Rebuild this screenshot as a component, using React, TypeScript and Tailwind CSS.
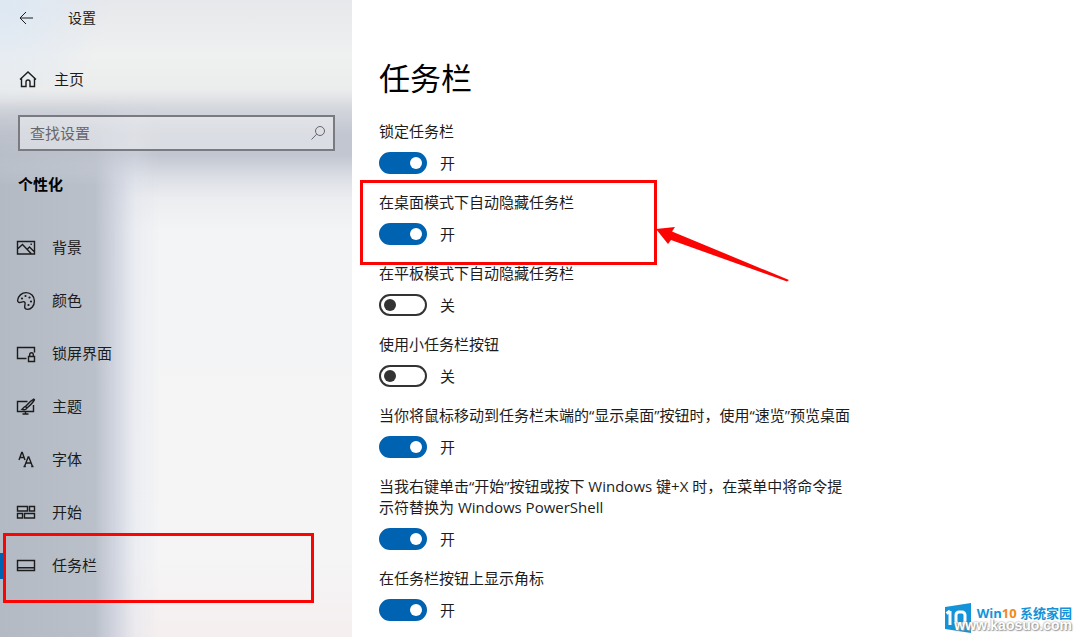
import { useState } from 'react';
import type { ReactNode } from 'react';
import clsx from 'clsx';

interface NavItem {
  id: string;
  label: string;
  icon: ReactNode;
}

interface Setting {
  id: string;
  label: string;
  on: boolean;
  marked?: boolean;
}

const iconProps = {
  width: 20,
  height: 20,
  viewBox: '0 0 20 20',
  fill: 'none',
  stroke: 'currentColor',
  strokeWidth: 1.4,
  'aria-hidden': true,
} as const;

const navItems: NavItem[] = [
  {
    id: 'background',
    label: '背景',
    icon: (
      <svg {...iconProps}>
        <path d="M1.500 3.500h17v12.500h-17zM1.500 11l5-4.500L15.500 16M11 11.500l2.500-2.500 5 5" />
        <path d="M14.500 6.300h1.400" />
      </svg>
    ),
  },
  {
    id: 'colors',
    label: '颜色',
    icon: (
      <svg {...iconProps}>
        <path d="M1.6 9.5C2 5 5.8 1.6 10.2 1.6c4.700 0 8.200 3.700 8.200 8.400 0 4.800-3.200 8.400-6.700 8.400-2.200 0-3.200-1.200-3-3.200.2-1.800.8-2.800.2-3.800-.7-1.200-2-.8-3.300-.3-2.100.8-4.100.4-4-1.600z" />
        <g fill="currentColor" stroke="none">
          <circle cx="6" cy="7.5" r="1.100" />
          <circle cx="9.500" cy="5" r="1.100" />
          <circle cx="13.500" cy="6.500" r="1.100" />
          <circle cx="15" cy="10.500" r="1.100" />
          <circle cx="12.500" cy="14" r="1.100" />
        </g>
      </svg>
    ),
  },
  {
    id: 'lockscreen',
    label: '锁屏界面',
    icon: (
      <svg {...iconProps}>
        <path d="M18.500 8.500V3.500h-17v11h9" />
        <path d="M12.500 12.500h6v5h-6zM13.700 12.500v-2a1.800 1.800 0 0 1 3.600 0v2" />
      </svg>
    ),
  },
  {
    id: 'themes',
    label: '主题',
    icon: (
      <svg {...iconProps}>
        <path d="M11.500 4.500h-10v10h16V8M9.500 14.500v2.500M6.500 17h6" />
        <path d="M17.800 2.200c-2 1-6 4.500-8.300 7.300l1.500 1.500c2.700-2.400 6.400-6.300 7.400-8.200zM9.500 9.500c-1.800 0-2 2-3.500 2.800 1.800.8 4.300.5 5-1.300" />
      </svg>
    ),
  },
  {
    id: 'fonts',
    label: '字体',
    icon: (
      <svg {...iconProps}>
        <path d="M3 10l2.700-7.500h.6L9 10M4 7.500h4M8.500 16.500l3.700-9.500h.6l3.700 9.500M10 13h5M7.500 16.500h2.300M15.200 16.500h2.300" />
      </svg>
    ),
  },
  {
    id: 'start',
    label: '开始',
    icon: (
      <svg {...iconProps}>
        <path d="M1.500 3.500h10v4.500h-10zM13.500 3.500h5v4.500h-5zM1.500 10.500h5v4.500h-5zM8.500 10.500h10v4.500h-10z" />
      </svg>
    ),
  },
  {
    id: 'taskbar',
    label: '任务栏',
    icon: (
      <svg {...iconProps}>
        <path d="M1.500 4.500h17v10h-17zM1.500 11.800h17" />
      </svg>
    ),
  },
];

const initialSettings: Setting[] = [
  { id: 'lock', label: '锁定任务栏', on: true },
  { id: 'hide-desktop', label: '在桌面模式下自动隐藏任务栏', on: true, marked: true },
  { id: 'hide-tablet', label: '在平板模式下自动隐藏任务栏', on: false },
  { id: 'small', label: '使用小任务栏按钮', on: false },
  {
    id: 'peek',
    label: '当你将鼠标移动到任务栏末端的“显示桌面”按钮时，使用“速览”预览桌面',
    on: true,
  },
  {
    id: 'powershell',
    label: '当我右键单击“开始”按钮或按下 Windows 键+X 时，在菜单中将命令提示符替换为 Windows PowerShell',
    on: true,
  },
  { id: 'badges', label: '在任务栏按钮上显示角标', on: true },
];

function SettingRow({ setting, onToggle }: { setting: Setting; onToggle: () => void }) {
  const { id, label, on, marked } = setting;

  return (
    <div className="relative flex flex-col gap-[10px]">
      <label htmlFor={id} className="max-w-[474px] leading-[21px]">
        {label}
      </label>
      <div className="flex items-center gap-[13px]">
        <button
          id={id}
          type="button"
          role="switch"
          aria-checked={on}
          onClick={onToggle}
          className={clsx(
            'flex h-[22px] w-12 items-center rounded-full border-2 px-[3px]',
            on ? 'justify-end border-[#0063b1] bg-[#0063b1]' : 'justify-start border-[#333] bg-white'
          )}
        >
          <span className={clsx('size-3 rounded-full', on ? 'bg-white' : 'bg-[#333]')} />
        </button>
        <span className="leading-[22px]">{on ? '开' : '关'}</span>
      </div>
      {marked && (
        <>
          <div className="pointer-events-none absolute -top-3 -left-[19px] h-[85px] w-[297px] border-3 border-[#fb0404]" />
          <svg
            className="pointer-events-none absolute top-[31px] left-[276px]"
            width="140"
            height="64"
            viewBox="0 0 140 64"
            aria-hidden="true"
          >
            <path d="M1 6L20 4l-3 4.500 117 48.500-2 1.500L16 17l-3 4z" fill="#fb0404" />
          </svg>
        </>
      )}
    </div>
  );
}

function Watermark() {
  return (
    <div className="pointer-events-none absolute right-2 bottom-1 flex items-start gap-[5px]">
      <svg width="28" height="30" viewBox="0 0 28 30" aria-hidden="true">
        <path d="M1 4L27 0v30L1 26z" fill="#1593d8" />
        <path d="M6 8v14M2.500 10.500L6 8" stroke="#fff" strokeWidth="3" fill="none" />
        <rect x="12" y="9" width="9" height="12" rx="3" stroke="#fff" strokeWidth="3" fill="none" />
      </svg>
      <div className="text-[13px] leading-[20px] font-bold whitespace-nowrap text-[#1593d8]">
        Win<span className="text-[#f08a24]">10</span> 系统家园
      </div>
      <span className="absolute right-0 bottom-0 font-['Liberation_Sans',sans-serif] text-[14px] leading-[16px] font-bold text-white [text-shadow:0_0_2px_#777,1px_1px_1px_#aaa]">
        www.kaosuo.com
      </span>
    </div>
  );
}

export default function App() {
  const [active, setActive] = useState('taskbar');
  const [query, setQuery] = useState('');
  const [settings, setSettings] = useState(initialSettings);

  const toggle = (id: string) => {
    setSettings(settings.map(s => (s.id === id ? { ...s, on: !s.on } : s)));
  };

  return (
    <div className="relative flex min-h-screen bg-white font-['Open_Sans','Noto_Sans_CJK_SC',sans-serif] text-[15px] text-[#1c1c1c]">
      <aside className="relative w-[352px] shrink-0 bg-[radial-gradient(circle_at_0px_0px,#dde8f4_0px,transparent_110px),linear-gradient(#e6e8eb_0px,#eff0f0_55px,#ebecec_90px,#d2d5dc_110px,#c2c6d0_135px,#c2c6d0_155px,#dcdfe6_178px,#ecedf0_198px,#f3f4f5_230px,#f5f5f6_560px,#f5efef_637px)]">
        <div className="absolute inset-0 bg-[linear-gradient(90deg,#b3bac4_0px,#bac0ca_95px,rgba(200,205,218,0.8)_115px,rgba(222,226,236,0.4)_135px,rgba(236,238,243,0)_160px)] mask-[linear-gradient(transparent_100px,#000_185px)]" />
        <div className="relative flex flex-col">
          <header className="flex h-[35px] items-center gap-[34px] pl-[18px]">
            <button type="button" aria-label="返回">
              <svg width="16" height="16" viewBox="0 0 16 16" fill="none" stroke="currentColor" aria-hidden="true">
                <path d="M15 8H2M8 2L2 8l6 6" />
              </svg>
            </button>
            <span className="text-[14px]">设置</span>
          </header>
          <a href="#home" className="mt-6 flex h-10 items-center gap-4 pl-[18px]">
            <svg {...iconProps}>
              <path d="M2 10.500L10 3l8 7.500M3.500 9.500v8H8v-4.500q0-2 2-2t2 2v4.500h4.500v-8" />
            </svg>
            主页
          </a>
          <div className="mr-[17px] ml-[18px] mt-4 flex h-9 items-center border-2 border-[#7a7b80] bg-white/40 pr-[7px] pl-[10px]">
            <input
              type="text"
              aria-label="查找设置"
              placeholder="查找设置"
              value={query}
              onChange={e => setQuery(e.target.value)}
              className="min-w-0 flex-1 outline-none placeholder:text-[#66676c]"
            />
            <svg width="16" height="16" viewBox="0 0 16 16" fill="none" stroke="#66676c" aria-hidden="true">
              <circle cx="10" cy="6" r="4.500" />
              <path d="M6.700 9.200L1.500 14.500" />
            </svg>
          </div>
          <h2 className="mt-[23px] pl-[18px] leading-[21px] font-bold text-black">个性化</h2>
          <nav className="mt-[26px] flex flex-col">
            {navItems.map(item => (
              <a
                key={item.id}
                href={`#${item.id}`}
                onClick={() => setActive(item.id)}
                className="relative flex h-[53px] items-center gap-4 pl-4"
              >
                {active === item.id && <span className="absolute left-0 h-[26px] w-[3px] bg-[#0063b1]" />}
                {item.icon}
                {item.label}
                {item.id === 'taskbar' && (
                  <span className="pointer-events-none absolute top-[-6px] left-[3px] h-[70px] w-[311px] border-3 border-[#fb0404]" />
                )}
              </a>
            ))}
          </nav>
        </div>
      </aside>
      <main className="min-w-0 flex-1 px-[27px] pt-[57px]">
        <h1 className="text-[31px] leading-[42px] text-black">任务栏</h1>
        <div className="mt-[22px] flex flex-col gap-[18px]">
          {settings.map(s => (
            <SettingRow key={s.id} setting={s} onToggle={() => toggle(s.id)} />
          ))}
        </div>
      </main>
      <Watermark />
    </div>
  );
}
